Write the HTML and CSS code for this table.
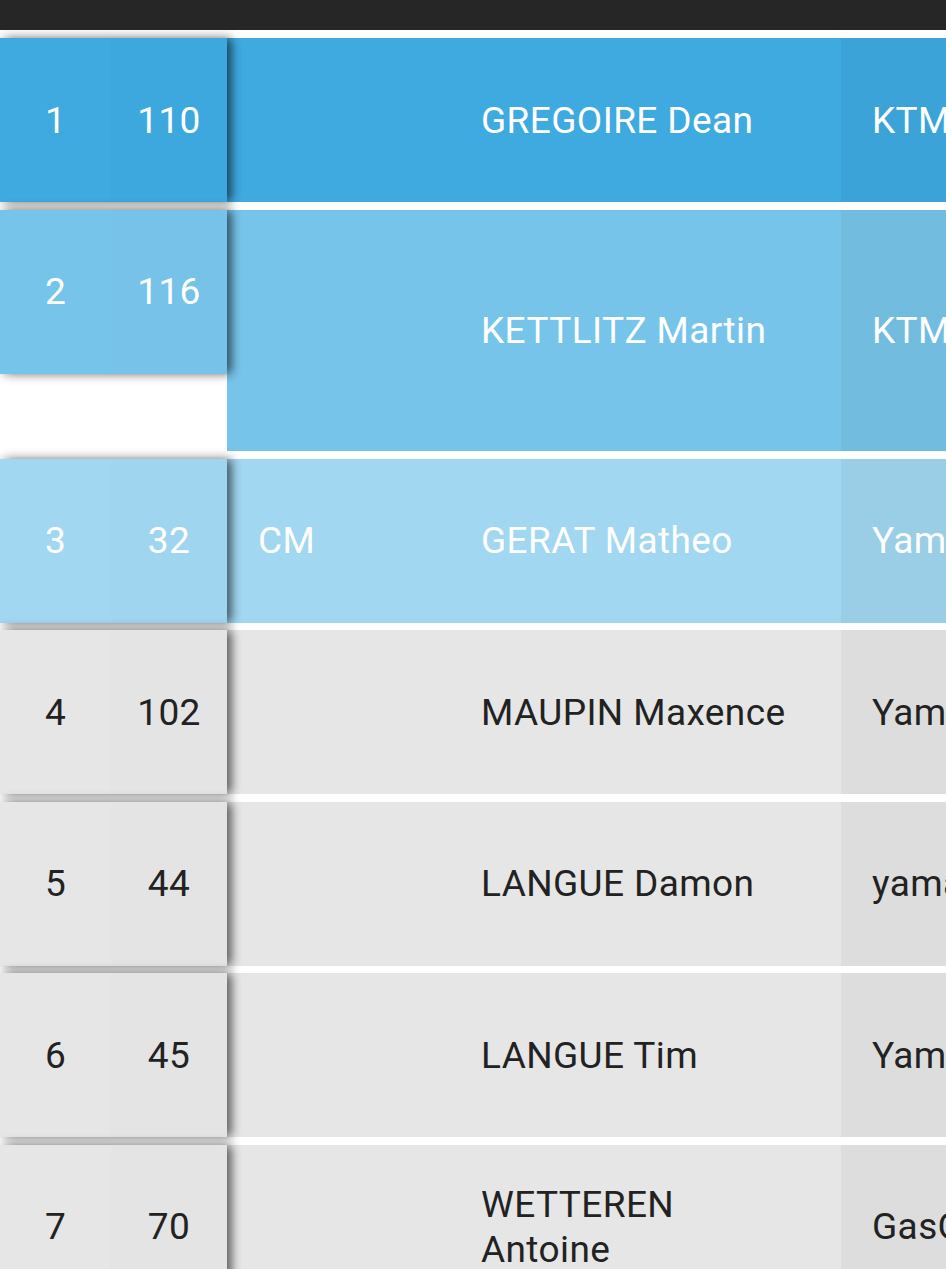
FILE: index.html
```html
<!DOCTYPE html>
<html lang="fr">
<head>
<meta charset="utf-8">
<title>Classement</title>
<link rel="stylesheet" href="styles.css">
</head>
<body>
<div class="topbar"></div>
<div class="table">
  <div class="row r-first">
    <div class="fixed"><div class="c pos">1</div><div class="c num">110</div></div>
    <div class="scroll"><div class="c cat"></div><div class="c name">GREGOIRE Dean</div><div class="c brand">KTM</div></div>
  </div>
  <div class="row r-second">
    <div class="fixed"><div class="c pos">2</div><div class="c num">116</div></div>
    <div class="scroll tall"><div class="c cat"></div><div class="c name">KETTLITZ Martin</div><div class="c brand">KTM</div></div>
  </div>
  <div class="row r-third">
    <div class="fixed"><div class="c pos">3</div><div class="c num">32</div></div>
    <div class="scroll"><div class="c cat">CM</div><div class="c name">GERAT Matheo</div><div class="c brand">Yamaha</div></div>
  </div>
  <div class="row r-grey">
    <div class="fixed"><div class="c pos">4</div><div class="c num">102</div></div>
    <div class="scroll"><div class="c cat"></div><div class="c name">MAUPIN Maxence</div><div class="c brand">Yamaha</div></div>
  </div>
  <div class="row r-grey">
    <div class="fixed"><div class="c pos">5</div><div class="c num">44</div></div>
    <div class="scroll"><div class="c cat"></div><div class="c name">LANGUE Damon</div><div class="c brand">yamaha</div></div>
  </div>
  <div class="row r-grey">
    <div class="fixed"><div class="c pos">6</div><div class="c num">45</div></div>
    <div class="scroll"><div class="c cat"></div><div class="c name">LANGUE Tim</div><div class="c brand">Yamaha</div></div>
  </div>
  <div class="row r-grey">
    <div class="fixed"><div class="c pos">7</div><div class="c num">70</div></div>
    <div class="scroll"><div class="c cat"></div><div class="c name">WETTEREN Antoine</div><div class="c brand">GasGas</div></div>
  </div>
</div>
</body>
</html>
```
FILE: styles.css
```css
html, body {
  margin: 0;
  padding: 0;
  background: #ffffff;
  overflow: hidden;
}
body {
  font-family: Roboto, "Noto Sans", sans-serif;
  font-size: 37px;
  letter-spacing: 0.4px;
  width: 946px;
}
.topbar {
  height: 30px;
  background: #262626;
}
.table {
  display: flex;
  flex-direction: column;
  gap: 7.6px;
  padding-top: 8px;
  overflow: hidden;
}
.row {
  display: flex;
  align-items: flex-start;
  width: 1200px;
}
.fixed {
  position: relative;
  z-index: 2;
  display: flex;
  width: 227px;
  height: 164px;
  flex: none;
  box-shadow: 6px 0 9px -2px rgba(0, 0, 0, 0.45), 3px 0 10px 1px rgba(0, 0, 0, 0.28);
}
.scroll {
  display: flex;
  flex: none;
  width: 973px;
  min-height: 164px;
}
.scroll.tall {
  min-height: 241.4px;
}
.c {
  display: flex;
  align-items: center;
  box-sizing: border-box;
  line-height: 45px;
}
.pos {
  width: 111px;
  justify-content: center;
}
.num {
  width: 116px;
  justify-content: center;
  background: rgba(0, 0, 0, 0.008);
}
.cat {
  width: 223px;
  padding-left: 31px;
}
.name {
  width: 391px;
  padding: 0 31px;
}
.brand {
  width: 359px;
  padding-left: 31px;
  white-space: nowrap;
  background: rgba(0, 0, 0, 0.04);
}
.r-first .fixed, .r-first .scroll {
  background: #3eaae0;
  color: #ffffff;
}
.r-second .fixed, .r-second .scroll {
  background: #77c4ea;
  color: #ffffff;
}
.r-third .fixed, .r-third .scroll {
  background: #a1d7f1;
  color: #ffffff;
}
.r-grey .fixed, .r-grey .scroll {
  background: #e6e6e6;
  color: #222222;
}
```
